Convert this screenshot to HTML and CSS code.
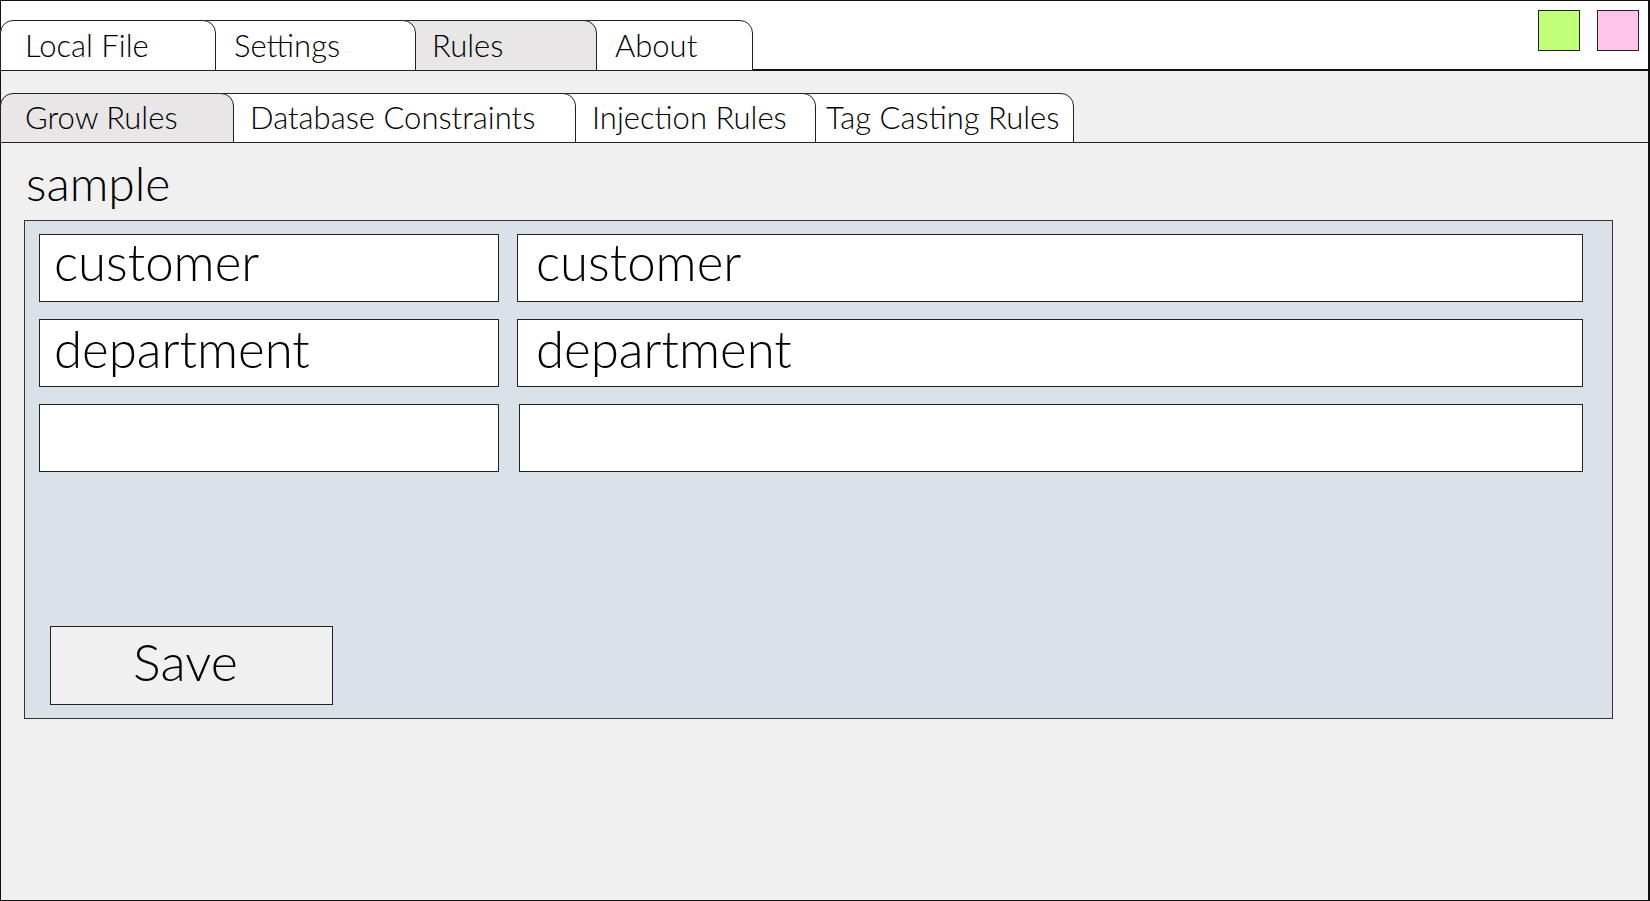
FILE: index.html
```html
<!DOCTYPE html>
<html lang="en">
<head>
<meta charset="utf-8">
<title>Grow Rules</title>
<link rel="stylesheet" href="styles.css">
</head>
<body>
<div class="window">
  <header class="topbar">
    <nav class="tabs" aria-label="Main">
      <button class="tab tab-local" type="button">Local File</button>
      <button class="tab tab-settings" type="button">Settings</button>
      <button class="tab tab-rules active" type="button">Rules</button>
      <button class="tab tab-about" type="button">About</button>
    </nav>
    <div class="window-controls">
      <button class="control control-green" type="button" aria-label="Minimize"></button>
      <button class="control control-pink" type="button" aria-label="Close"></button>
    </div>
  </header>
  <nav class="tabs subtabs" aria-label="Rules">
    <button class="tab tab-grow active" type="button">Grow Rules</button>
    <button class="tab tab-database" type="button">Database Constraints</button>
    <button class="tab tab-injection" type="button">Injection Rules</button>
    <button class="tab tab-casting" type="button">Tag Casting Rules</button>
  </nav>
  <main class="content">
    <h1 class="title">sample</h1>
    <form class="panel">
      <div class="rows">
        <div class="row row-first">
          <input class="field" type="text" aria-label="Name 1" value="customer">
          <input class="field" type="text" aria-label="Value 1" value="customer">
        </div>
        <div class="row">
          <input class="field" type="text" aria-label="Name 2" value="department">
          <input class="field" type="text" aria-label="Value 2" value="department">
        </div>
        <div class="row row-blank">
          <input class="field" type="text" aria-label="Name 3">
          <input class="field" type="text" aria-label="Value 3">
        </div>
      </div>
      <button class="save" type="button">Save</button>
    </form>
  </main>
</div>
</body>
</html>
```
FILE: styles.css
```css
* {
  box-sizing: border-box;
}

body {
  margin: 0;
  font-family: Lato, "Open Sans", sans-serif;
  font-weight: 300;
  color: #000;
}

button,
input {
  margin: 0;
  font: inherit;
  color: inherit;
}

.window {
  min-height: 100vh;
  background: #f0f0f0;
  border: 1px solid #111;
  border-right-width: 2px;
}

.topbar {
  display: flex;
  justify-content: space-between;
  align-items: flex-start;
  background: linear-gradient(#111, #111) bottom / 100% 2px no-repeat #fff;
}

.tabs {
  display: flex;
  isolation: isolate;
}

.topbar .tabs {
  padding-top: 19px;
}

.tab {
  position: relative;
  height: 51px;
  margin-left: -15px;
  padding: 0 0 2px 30px;
  border: 1px solid #222;
  border-radius: 0 13px 0 0;
  background: #fff;
  font-size: 31px;
  line-height: 38px;
  text-align: left;
  white-space: nowrap;
}

.tab:first-child {
  margin-left: -1px;
  padding-left: 24px;
  border-radius: 13px 13px 0 0;
}

.tab:nth-child(1) { z-index: 4; }
.tab:nth-child(2) { z-index: 3; }
.tab:nth-child(3) { z-index: 2; }
.tab:nth-child(4) { z-index: 1; }

.tab.active {
  background: #e8e6e7;
}

.tab-local { width: 216px; }
.tab-settings { width: 215px; padding-left: 32px; }
.tab-rules { width: 196px; }
.tab-about { width: 171px; padding-left: 32px; }
.tab-grow { width: 234px; }
.tab-database { width: 357px; }
.tab-injection { width: 255px; }
.tab-casting { width: 273px; padding-left: 24px; }

.window-controls {
  display: flex;
  gap: 17px;
  padding: 9px 9px 0 0;
}

.control {
  width: 42px;
  height: 41px;
  padding: 0;
  border: 1px solid #222;
}

.control-green { background: #c2ff78; }
.control-pink { background: #ffc4ea; }

.subtabs {
  padding-top: 22px;
  background: linear-gradient(#222, #222) bottom / 100% 1px no-repeat;
}

.subtabs .tab {
  height: 50px;
}

.content {
  padding: 13px 35px 24px 23px;
}

.title {
  margin: 0;
  padding: 0 0 10px 2px;
  font-size: 48px;
  font-weight: 300;
  line-height: 54px;
}

.panel {
  display: flex;
  flex-direction: column;
  align-items: flex-start;
  justify-content: space-between;
  min-height: 499px;
  padding: 13px 29px 13px 14px;
  border: 1px solid #333;
  background: #dae1e8;
}

.rows {
  display: grid;
  gap: 17px;
  width: 100%;
}

.row {
  display: grid;
  grid-template-columns: 460fr 1066fr;
  gap: 18px;
}

.row-blank {
  grid-template-columns: 460fr 1064fr;
  gap: 20px;
}

.field {
  width: 100%;
  min-width: 0;
  height: 68px;
  padding: 0 14px 10px;
  border: 1px solid #222;
  border-radius: 0;
  background: #fff;
  font-size: 51px;
}

.field + .field {
  padding-left: 18px;
}

.row-first .field {
  padding-bottom: 14px;
}

.save {
  width: 283px;
  height: 79px;
  margin-left: 11px;
  padding: 0 28px 10px 16px;
  border: 1px solid #222;
  background: #f0f0f0;
  font-size: 52px;
}
```
